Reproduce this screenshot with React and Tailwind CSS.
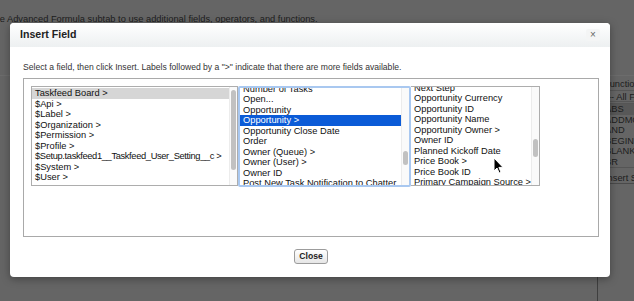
import React from "react";

const firstList = [
  "Taskfeed Board >",
  "$Api >",
  "$Label >",
  "$Organization >",
  "$Permission >",
  "$Profile >",
  "$Setup.taskfeed1__Taskfeed_User_Setting__c >",
  "$System >",
  "$User >",
];

const secondList = [
  "Number of Tasks",
  "Open...",
  "Opportunity",
  "Opportunity >",
  "Opportunity Close Date",
  "Order",
  "Owner (Queue) >",
  "Owner (User) >",
  "Owner ID",
  "Post New Task Notification to Chatter",
];

const thirdList = [
  "Next Step",
  "Opportunity Currency",
  "Opportunity ID",
  "Opportunity Name",
  "Opportunity Owner >",
  "Owner ID",
  "Planned Kickoff Date",
  "Price Book >",
  "Price Book ID",
  "Primary Campaign Source >",
];

const functionNames = ["ABS", "ADDMONTHS", "AND", "BEGINS", "BLANKVALUE", "BR"];

// one line of a listbox
function Row({label, selected, focused, tight}) {
  let tone = "text-[#111]";
  if (selected && focused) tone = "bg-[#0b5bd7] text-white";
  else if (selected) tone = "bg-[#d6d6d6] text-[#111]";
  return (
    <div className={`h-[10.5px] leading-[10.5px] pl-[3px] whitespace-nowrap ${tight ? "tracking-[-0.35px]" : ""} ${tone}`}>
      {label}
    </div>
  );
}

// thin mac style scrollbar, thumb pushed down by a spacer
function Scrollbar({offset, size}) {
  return (
    <div className="w-[8px] shrink-0 flex flex-col items-center bg-[#fafafa] border-l border-[#ececec]">
      <div style={{height: offset}} />
      <div className="w-[5px] rounded-full bg-[#c1c1c1]" style={{height: size}} />
    </div>
  );
}

function Pointer() {
  return (
    <svg className="absolute left-[493px] top-[157px]" width="11" height="17" viewBox="0 0 11 17">
      <path d="M1 1 L1 14 L4 11 L6.2 16 L8 15.2 L5.9 10.4 L10 10.4 Z" fill="#000" stroke="#fff" strokeWidth="1" strokeLinejoin="round"/>
    </svg>
  );
}

function InsertFieldDialog() {
  return (
    <div className="absolute left-[10px] top-[23px] w-[600px] h-[254px] bg-white rounded-[4px] shadow-[0_2px_8px_rgba(0,0,0,0.35)] flex flex-col">
      <div className="h-[24px] shrink-0 flex items-center justify-between pl-[10px] pr-[10px] rounded-t-[4px] bg-gradient-to-b from-white to-[#edf0f1]">
        <div className="text-[10.6px] font-bold text-[#222]">Insert Field</div>
        <div className="w-[14px] h-[12px] flex items-center justify-center bg-[#f4f5f5] rounded-[2px] text-[10px] leading-none text-[#666]">
          ×
        </div>
      </div>

      <div className="flex flex-col pl-[13px] pr-[11px] pt-[14px]">
        <div className="text-[8.6px] leading-[12px] text-[#333] whitespace-nowrap">
          Select a field, then click Insert. Labels followed by a "&gt;" indicate that there are more fields available.
        </div>

        <div className="mt-[5px] h-[159px] border border-[#a9a9a9] pl-[7px] pt-[7px]">
          <div className="flex items-start text-[9.3px]">
            <div className="w-[207px] h-[100px] border border-[#adadad] flex bg-white">
              <div className="flex-1 overflow-hidden pt-[1px]">
                {firstList.map((name, i) => (
                  <Row key={name} label={name} selected={i === 0} tight={i === 6} />
                ))}
              </div>
              <Scrollbar offset={3} size={80} />
            </div>

            <div className="w-[173px] h-[101px] border-2 border-[#a9c8f0] rounded-[2px] flex bg-white">
              <div className="flex-1 overflow-hidden">
                <div className="mt-[-4.5px]">
                  {secondList.map((name, i) => (
                    <Row key={name} label={name} selected={i === 3} focused />
                  ))}
                </div>
              </div>
              <Scrollbar offset={63} size={14} />
            </div>

            <div className="w-[129px] h-[100px] border border-l-0 border-[#adadad] flex bg-white">
              <div className="flex-1 overflow-hidden">
                <div className="mt-[-4.5px]">
                  {thirdList.map((name) => (
                    <Row key={name} label={name} />
                  ))}
                </div>
              </div>
              <Scrollbar offset={52} size={18} />
            </div>
          </div>
        </div>

        <div className="mt-[12px] flex justify-center">
          <div className="h-[15px] px-[4px] flex items-center border border-[#9c9c9c] rounded-[3px] bg-gradient-to-b from-white to-[#e6e6e6] text-[8.6px] font-bold text-[#222]">
            Close
          </div>
        </div>
      </div>
    </div>
  );
}

export default function App() {
  return (
    <div className="relative w-[634px] h-[301px] overflow-hidden bg-[#656565] font-['Liberation_Sans',Arial,sans-serif]">
      <div className="pt-[13px] ml-[-8px] text-[9.3px] leading-[12px] text-[#1d1d1d] whitespace-nowrap">
        the Advanced Formula subtab to use additional fields, operators, and functions.
      </div>

      <div className="mt-[50px] border-t border-[#6c6c6c]">
        <div className="ml-[597px] w-[150px] h-[230px] border-l border-[#3f3f3f] pl-[6px] pt-[3px] text-[9.3px] text-[#1d1d1d]">
          <div className="leading-[11px]">Functions</div>
          <div className="mt-[0px] ml-[4px] h-[12px] leading-[12px] border-y border-[#555] whitespace-nowrap">
            -- All Function Categories --
          </div>
          <div className="mt-[1px] border border-[#555] w-[120px]">
            {functionNames.map((fn, i) => (
              <div key={fn} className={`h-[10.5px] leading-[10.5px] ${i === 0 ? "bg-[#585858]" : ""}`}>
                {fn}
              </div>
            ))}
          </div>
          <div className="mt-[4px] ml-[1px] h-[12px] leading-[12px] border-b border-[#4a4a4a] whitespace-nowrap">
            Insert Selected Function
          </div>
        </div>
      </div>

      <InsertFieldDialog />
      <Pointer />
    </div>
  );
}
